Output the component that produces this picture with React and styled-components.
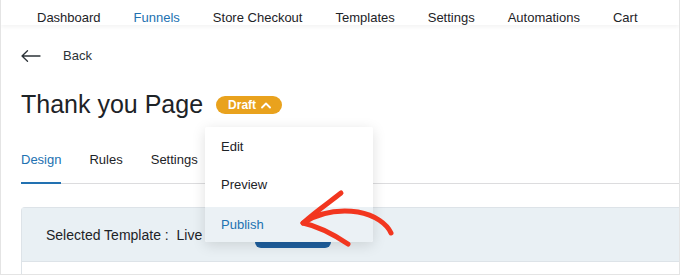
import React from 'react';
import styled, { createGlobalStyle } from 'styled-components';

const GlobalStyle = createGlobalStyle`
  html, body {
    margin: 0;
    padding: 0;
    background: #ffffff;
  }
  body {
    font-family: "Liberation Sans", Arial, sans-serif;
    color: #1d2327;
  }
`;

const Frame = styled.div`
  position: relative;
  width: 680px;
  height: 275px;
  box-sizing: border-box;
  border: 1px solid #e4e4e4;
  border-top: none;
  overflow: hidden;
  display: flex;
  flex-direction: column;
`;

const TopNav = styled.nav`
  height: 25px;
  box-sizing: border-box;
  padding: 10px 0 0 36px;
  display: flex;
  gap: 33px;
  font-size: 13px;
  line-height: 15px;
  box-shadow: 0 2px 4px rgba(0, 0, 0, 0.05);
`;

const NavItem = styled.span`
  color: ${props => props.active ? '#2271b1' : '#1d2327'};
  white-space: nowrap;
`;

const Main = styled.div`
  padding: 0 0 0 20px;
  display: flex;
  flex-direction: column;
`;

const BackRow = styled.div`
  margin-top: 23px;
  display: flex;
  align-items: center;
  gap: 22px;
  font-size: 13px;
  line-height: 16px;
  color: #2c3338;
`;

const TitleRow = styled.div`
  margin-top: 25px;
  display: flex;
  align-items: center;
  gap: 13px;
  height: 30px;
`;

const Title = styled.h1`
  margin: 0;
  font-size: 25px;
  line-height: 30px;
  font-weight: 400;
  color: #1d2327;
`;

const Badge = styled.span`
  display: inline-flex;
  align-items: center;
  gap: 5px;
  height: 18px;
  padding: 0 11px 0 12px;
  border-radius: 10px;
  background: #e9a21d;
  color: #ffffff;
  font-size: 12px;
  font-weight: 700;
  margin-top: 2px;
`;

const Tabs = styled.div`
  margin-top: 33px;
  display: flex;
  gap: 28px;
  border-bottom: 1px solid #dcdcde;
`;

const Tab = styled.span`
  padding-bottom: 14px;
  margin-bottom: -1px;
  font-size: 13px;
  line-height: 16px;
  color: ${props => props.active ? '#2271b1' : '#1d2327'};
  border-bottom: 2px solid ${props => props.active ? '#2271b1' : 'transparent'};
`;

const Card = styled.div`
  margin-top: 23px;
  border: 1px solid #dde3e8;
  border-right: none;
  border-radius: 4px 0 0 0;
  height: 120px;
`;

const CardHeader = styled.div`
  height: 54px;
  box-sizing: border-box;
  background: #e9f0f4;
  border-bottom: 1px solid #dde3e8;
  display: flex;
  align-items: center;
  padding-left: 24px;
  gap: 53px;
  font-size: 14px;
  color: #1d2327;
`;

const BlueButton = styled.span`
  display: inline-block;
  width: 76px;
  height: 26px;
  border-radius: 6px;
  background: #1e5f9e;
  margin-top: 1px;
`;

const Dropdown = styled.div`
  position: absolute;
  left: 204px;
  top: 127px;
  width: 168px;
  background: #ffffff;
  border-radius: 2px;
  box-shadow: 0 3px 14px rgba(0, 0, 0, 0.13);
  overflow: hidden;
`;

const MenuItem = styled.div`
  height: ${props => props.highlight ? '35px' : '38px'};
  margin-top: ${props => props.highlight ? '4px' : '0'};
  display: flex;
  align-items: center;
  padding-left: 16px;
  font-size: 13px;
  color: ${props => props.highlight ? '#2271b1' : '#1d2327'};
  background: ${props => props.highlight ? '#ebf1f5' : '#ffffff'};
`;

const ArrowMark = styled.svg`
  position: absolute;
  left: 290px;
  top: 185px;
  pointer-events: none;
`;

const BackIcon = () => (
  <svg width="20" height="12" viewBox="0 0 20 12" fill="none" stroke="#2c3338" strokeWidth="1.3" strokeLinecap="round" strokeLinejoin="round">
    <path d="M19 6H1M6.5 0.8L1 6l5.5 5.2" />
  </svg>
);

const ChevronUp = () => (
  <svg width="10" height="7" viewBox="0 0 10 7" fill="none" stroke="#ffffff" strokeWidth="1.8" strokeLinecap="round" strokeLinejoin="round">
    <path d="M1 5.5L5 1.5l4 4" />
  </svg>
);

const navItems = ['Dashboard', 'Funnels', 'Store Checkout', 'Templates', 'Settings', 'Automations', 'Cart'];

export default function App() {
  return (
    <>
      <GlobalStyle />
      <Frame>
        <TopNav>
          {navItems.map(item => (
            <NavItem key={item} active={item === 'Funnels'}>{item}</NavItem>
          ))}
        </TopNav>
        <Main>
          <BackRow>
            <BackIcon />
            <span>Back</span>
          </BackRow>
          <TitleRow>
            <Title>Thank you Page</Title>
            <Badge>Draft <ChevronUp /></Badge>
          </TitleRow>
          <Tabs>
            <Tab active>Design</Tab>
            <Tab>Rules</Tab>
            <Tab>Settings</Tab>
          </Tabs>
          <Card>
            <CardHeader>
              <span>Selected Template :&nbsp; Live</span>
              <BlueButton />
            </CardHeader>
          </Card>
        </Main>
        <Dropdown>
          <MenuItem>Edit</MenuItem>
          <MenuItem>Preview</MenuItem>
          <MenuItem highlight>Publish</MenuItem>
        </Dropdown>
        <ArrowMark width="110" height="70" viewBox="0 0 110 70" fill="none" stroke="#f2361f" strokeWidth="5" strokeLinecap="round" strokeLinejoin="round">
          <path d="M50 8C40 16 24 27 12 38C26 41 42 49 57 59" />
          <path d="M12 38C26 29 45 24 67 27C84 30 96 39 100 48" />
        </ArrowMark>
      </Frame>
    </>
  );
}
